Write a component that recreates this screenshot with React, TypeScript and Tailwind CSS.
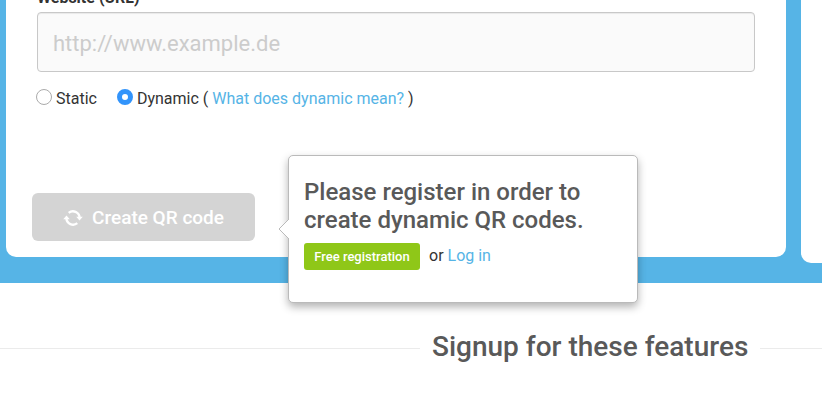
function SyncIcon() {
  return (
    <svg viewBox="0 0 20 18" className="h-[18px] w-5" fill="none" aria-hidden="true">
      <path d="M5.7 3.8A6.7 6.7 0 0 1 16.6 8.6" stroke="currentColor" strokeWidth="2.3" />
      <path d="M14.3 14.2A6.7 6.7 0 0 1 3.4 9.4" stroke="currentColor" strokeWidth="2.3" />
      <path d="M0.2 10.2H6.8L3.5 6.4Z" fill="currentColor" />
      <path d="M13.2 7.8H19.8L16.5 11.6Z" fill="currentColor" />
    </svg>
  );
}

const radio =
  "m-0 mt-px size-4 shrink-0 appearance-none rounded-full border border-[#ababab] bg-white checked:border-[5px] checked:border-[#3294fb]";

function RegisterPopover() {
  return (
    <div
      role="dialog"
      aria-labelledby="register-title"
      className="absolute top-[-38px] left-[256px] h-[148px] w-[350px] rounded-[5px] border border-[#bababa] bg-white px-[15px] pt-[22px] shadow-[0_4px_8px_rgba(0,0,0,0.3)]"
    >
      <svg viewBox="0 0 11 20" className="absolute top-[63px] left-[-11px] h-5 w-[11px]" aria-hidden="true">
        <path d="M11 0L1 10L11 20" fill="#fff" stroke="#bababa" />
      </svg>
      <h3 id="register-title" className="text-2xl leading-7 font-medium text-[#595959]">
        Please register in order to
        <br />
        create dynamic QR codes.
      </h3>
      <div className="mt-[9px] flex items-start text-base">
        <button type="button" className="h-[27px] w-[116px] rounded-[3px] bg-[#8fc718] text-[13px] font-medium text-white">
          Free registration
        </button>
        <span className="ml-[9px] leading-[26px]">
          or{" "}
          <a href="#login" className="text-[#56b4e6]">
            Log in
          </a>
        </span>
      </div>
    </div>
  );
}

export default function App() {
  return (
    <div className="overflow-hidden bg-white font-['Roboto','Liberation_Sans',sans-serif] text-[#333]">
      <section className="flex items-start gap-[15px] bg-[#56b4e6] pb-5 pl-[6px]">
        <div className="w-[780px] shrink-0 rounded-b-[10px] bg-white pb-4">
          <form className="-mt-3" onSubmit={(e) => e.preventDefault()}>
            <div className="px-[31px]">
              <label htmlFor="website" className="mb-1 block text-base leading-5 font-bold">
                Website (URL)
              </label>
              <input
                id="website"
                type="url"
                placeholder="http://www.example.de"
                className="block h-[60px] w-full rounded-[4px] border border-[#c8c8c8] bg-[#fafafa] px-[15px] pt-0.5 text-[22px] shadow-[inset_0_1px_1px_rgba(0,0,0,0.07)] placeholder:text-[#ccc]"
              />
            </div>
            <div className="mt-4 flex items-start pl-[30px] text-base leading-[22px]">
              <label className="flex items-start gap-1">
                <input type="radio" name="kind" className={radio} />
                Static
              </label>
              <label className="ml-5 flex items-start gap-1">
                <input type="radio" name="kind" defaultChecked className={radio} />
                Dynamic
              </label>
              <span className="ml-1">
                ({" "}
                <a href="#dynamic" className="text-[#56b4e6]">
                  What does dynamic mean?
                </a>{" "}
                )
              </span>
            </div>
            <div className="relative mt-[83px] ml-[26px]">
              <button
                type="button"
                className="flex h-12 w-[223px] items-center justify-center gap-[9px] rounded-md bg-[#d4d4d4] pt-0.5 text-[19px] font-medium text-white"
              >
                <SyncIcon />
                Create QR code
              </button>
              <RegisterPopover />
            </div>
          </form>
        </div>
        <div className="h-[263px] w-80 shrink-0 rounded-b-[10px] bg-white" />
      </section>
      <section className="flex items-center gap-3 pt-11 pb-14">
        <div className="w-[420px] shrink-0 border-t border-[#ebebeb]" />
        <h2 className="shrink-0 pb-0.5 text-[28px] leading-10 font-medium text-[#595959]">Signup for these features</h2>
        <div className="grow border-t border-[#ebebeb]" />
      </section>
    </div>
  );
}
